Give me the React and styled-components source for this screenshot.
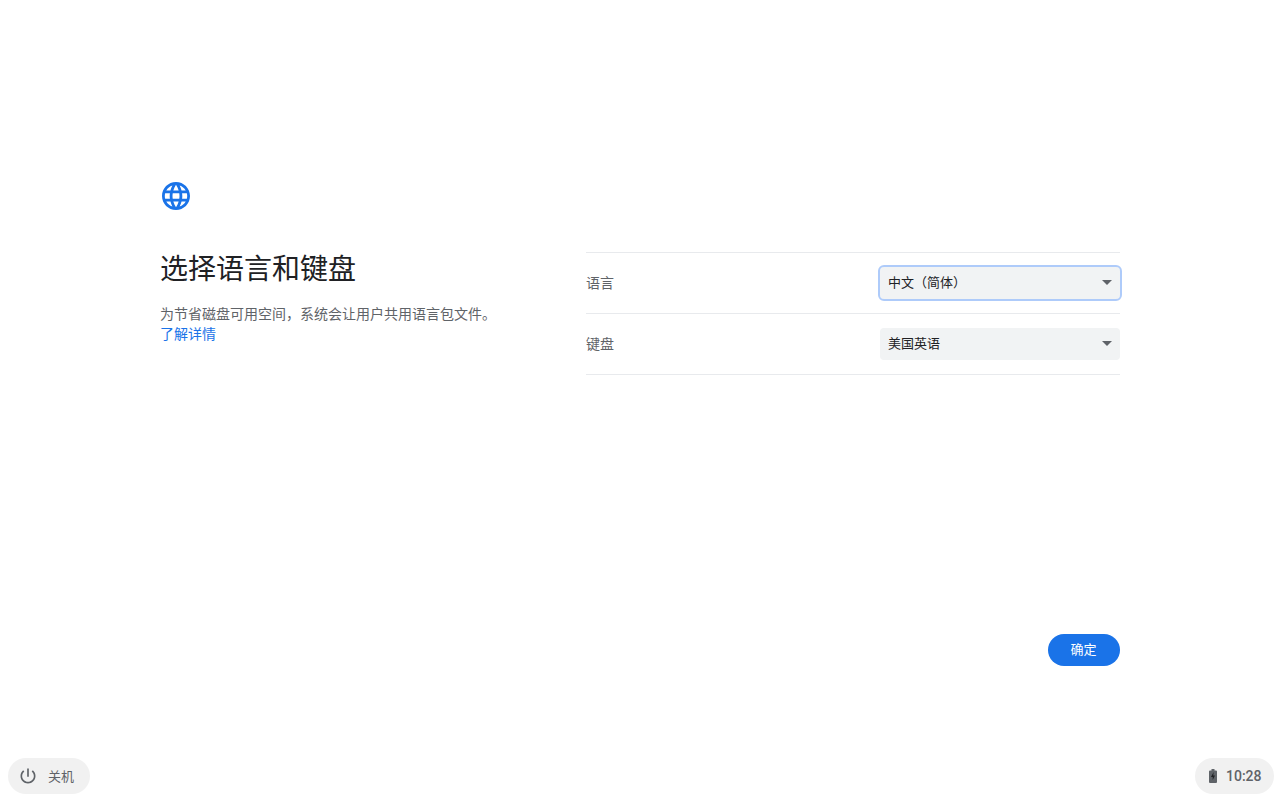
import React from "react";
import styled, { createGlobalStyle } from "styled-components";

const Global = createGlobalStyle`
  html, body { margin: 0; padding: 0; background: #fff; }
  body { font-family: Roboto, "Noto Sans CJK SC", sans-serif; }
`;

const Page = styled.div`
  width: 1280px;
  height: 800px;
  display: flex;
  flex-direction: column;
  overflow: hidden;
`;

const Dialog = styled.main`
  flex: 1;
  display: flex;
  flex-direction: column;
  padding: 182px 160px 0;
`;

const Columns = styled.div`
  display: flex;
  flex: 1;
`;

const Intro = styled.section`
  width: 426px;
  display: flex;
  flex-direction: column;
`;

const GlobeBox = styled.div`
  height: 28px;
  padding-left: 2px;
  color: #1a73e8;
`;

const Title = styled.h1`
  margin: 37px 0 0;
  font: 400 28px/40px "Noto Sans CJK SC", sans-serif;
  color: #202124;
`;

const Sub = styled.p`
  margin: 16px 0 0;
  font: 400 14px/20px "Noto Sans CJK SC", sans-serif;
  color: #5f6368;
  width: 340px;
`;

const Link = styled.a`
  display: block;
  color: #1a73e8;
`;

const Settings = styled.section`
  width: 534px;
  margin-top: 70px;
  border-bottom: 1px solid #e8eaed;
  align-self: flex-start;
`;

const Row = styled.div`
  height: 60px;
  border-top: 1px solid #e8eaed;
  display: flex;
  align-items: center;
  justify-content: space-between;
`;

const RowLabel = styled.span`
  margin-bottom: 2px;
  font: 400 14px/20px "Noto Sans CJK SC", sans-serif;
  color: #5f6368;
`;

const Select = styled.div`
  position: relative;
  width: 240px;
  height: 32px;
  box-sizing: border-box;
  border-radius: 4px;
  background: #f1f3f4;
  padding: 0 0 2px 8px;
  display: flex;
  align-items: center;
  font: 400 13px/20px "Noto Sans CJK SC", sans-serif;
  color: #202124;
  outline: ${(p) => (p.$focused ? "2px solid #aecbfa" : "none")};
  outline-offset: 0;
`;

const Caret = styled.span`
  position: absolute;
  right: 8px;
  top: 13px;
  width: 0;
  height: 0;
  border-left: 5px solid transparent;
  border-right: 5px solid transparent;
  border-top: 5px solid #5f6368;
`;

const Actions = styled.div`
  display: flex;
  justify-content: flex-end;
  padding-bottom: 92px;
`;

const Primary = styled.button`
  width: 72px;
  height: 32px;
  border: 0;
  border-radius: 16px;
  background: #1a73e8;
  color: #fff;
  font: 400 13px/20px "Noto Sans CJK SC", sans-serif;
  padding: 0 1px 2px 0;
`;

const Shelf = styled.footer`
  display: flex;
  justify-content: space-between;
  padding: 0 6px 6px 8px;
`;

const Pill = styled.div`
  height: 36px;
  border-radius: 18px;
  background: #f1f1f1;
  display: flex;
  align-items: center;
  box-sizing: border-box;
  color: #5f6368;
`;

const PowerPill = styled(Pill)`
  width: 82px;
  padding-left: 10px;
  gap: 10px;
  font: 400 13px/20px "Noto Sans CJK SC", sans-serif;
`;

const ClockPill = styled(Pill)`
  width: 79px;
  padding-left: 14px;
  gap: 9px;
  font: 500 14px/20px Roboto, sans-serif;
`;

const Globe = () => (
  <svg width="28" height="28" viewBox="2 2 20 20" fill="currentColor" style={{ display: "block" }}>
    <path d="M11.99 2C6.47 2 2 6.48 2 12s4.47 10 9.99 10C17.52 22 22 17.52 22 12S17.52 2 11.99 2zm6.93 6h-2.95c-.32-1.25-.78-2.45-1.38-3.56 1.84.63 3.37 1.91 4.33 3.56zM12 4.04c.83 1.2 1.48 2.53 1.91 3.96h-3.82c.43-1.43 1.08-2.76 1.91-3.96zM4.26 14C4.1 13.36 4 12.69 4 12s.1-1.36.26-2h3.38c-.08.66-.14 1.32-.14 2 0 .68.06 1.34.14 2H4.26zm.82 2h2.95c.32 1.25.78 2.45 1.38 3.56-1.84-.63-3.37-1.9-4.33-3.56zm2.95-8H5.08c.96-1.66 2.49-2.93 4.33-3.56C8.81 5.55 8.35 6.75 8.03 8zM12 19.96c-.83-1.2-1.48-2.53-1.91-3.96h3.82c-.43 1.43-1.08 2.76-1.91 3.96zM14.34 14H9.66c-.09-.66-.16-1.32-.16-2 0-.68.07-1.35.16-2h4.68c.09.65.16 1.32.16 2 0 .68-.07 1.34-.16 2zm.25 5.56c.6-1.11 1.06-2.31 1.38-3.56h2.95c-.96 1.65-2.49 2.93-4.33 3.56zM16.36 14c.08-.66.14-1.32.14-2 0-.68-.06-1.34-.14-2h3.38c.16.64.26 1.31.26 2s-.1 1.36-.26 2h-3.38z" />
  </svg>
);

const Power = () => (
  <svg width="20" height="20" viewBox="0 0 24 24" fill="#5f6368" style={{ display: "block" }}>
    <path d="M13 3h-2v10h2V3zm4.83 2.17l-1.42 1.42C17.99 7.86 19 9.81 19 12c0 3.87-3.13 7-7 7s-7-3.13-7-7c0-2.19 1.01-4.14 2.58-5.42L6.17 5.17C4.23 6.82 3 9.26 3 12c0 4.97 4.03 9 9 9s9-4.03 9-9c0-2.74-1.23-5.18-3.17-6.83z" />
  </svg>
);

const Battery = () => (
  <svg width="8" height="14" viewBox="0 0 8 14" style={{ display: "block" }}>
    <path d="M2.500 0h3v1.500H7a1 1 0 0 1 1 1V13a1 1 0 0 1-1 1H1a1 1 0 0 1-1-1V2.500a1 1 0 0 1 1-1h1.500z" fill="#5f6368" />
    <path d="M4.600 3 2 8h1.700v3L6 6.500H4.300z" fill="#202124" />
  </svg>
);

export default function App() {
  return (
    <Page>
      <Global />
      <Dialog>
        <Columns>
          <Intro>
            <GlobeBox><Globe /></GlobeBox>
            <Title>选择语言和键盘</Title>
            <Sub>
              为节省磁盘可用空间，系统会让用户共用语言包文件。
              <Link>了解详情</Link>
            </Sub>
          </Intro>
          <Settings>
            <Row>
              <RowLabel>语言</RowLabel>
              <Select $focused>中文（简体）<Caret /></Select>
            </Row>
            <Row>
              <RowLabel>键盘</RowLabel>
              <Select>美国英语<Caret /></Select>
            </Row>
          </Settings>
        </Columns>
        <Actions>
          <Primary>确定</Primary>
        </Actions>
      </Dialog>
      <Shelf>
        <PowerPill><Power />关机</PowerPill>
        <ClockPill><Battery />10:28</ClockPill>
      </Shelf>
    </Page>
  );
}
